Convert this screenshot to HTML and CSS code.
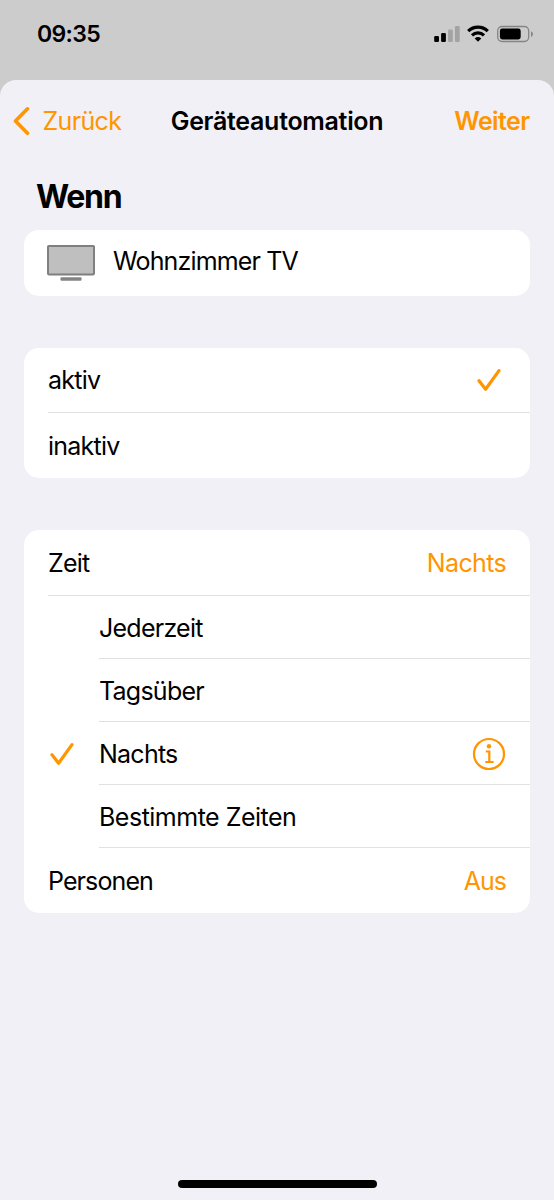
FILE: index.html
```html
<!DOCTYPE html>
<html lang="de">
<head>
<meta charset="utf-8">
<title>Geräteautomation</title>
<link rel="stylesheet" href="styles.css">
</head>
<body>
<div class="screen">
  <header class="status">
    <span class="clock">09:35</span>
    <svg class="indicators" width="100" height="18" viewBox="0 0 100 18">
      <rect x="0.2" y="11" width="4.8" height="6" rx="1.3"/>
      <rect x="7.1" y="8" width="4.8" height="9" rx="1.3"/>
      <rect class="dim" x="14" y="4.6" width="4.8" height="12.4" rx="1.3"/>
      <rect class="dim" x="20.9" y="1" width="4.8" height="16" rx="1.3"/>
      <path class="wave" d="M34.2 6.2 A14 14 0 0 1 53.8 6.2 M38 10.3 A8.7 8.7 0 0 1 50 10.3"/>
      <path d="M44 16.8 L40.7 13.4 Q44 10.8 47.3 13.4Z"/>
      <rect class="shell" x="63.7" y="1.5" width="31" height="15" rx="4.4"/>
      <rect x="65.9" y="3.6" width="20.8" height="10.8" rx="2.3"/>
      <path class="cap" d="M97 6.2 Q99 7.1 99 9 Q99 10.9 97 11.9Z"/>
    </svg>
  </header>
  <main class="sheet">
    <nav class="nav">
      <a class="back">
        <svg class="chevron" width="18" height="30" viewBox="0 0 18 30"><path d="M15.5 2.8 L3.5 15 L15.5 27.3"/></svg>
        <span class="back-label">Zurück</span>
      </a>
      <h1 class="title">Geräteautomation</h1>
      <a class="next">Weiter</a>
    </nav>
    <h2 class="heading">Wenn</h2>
    <section class="card single">
      <div class="row device">
        <svg class="tv" width="48" height="37" viewBox="0 0 48 37">
          <rect class="tv-screen" x="1" y="1" width="46" height="28.4" rx="0.8"/>
          <rect class="tv-foot" x="13.5" y="32.2" width="21" height="3.6" rx="1"/>
        </svg>
        <span class="label wohnzimmer">Wohnzimmer TV</span>
      </div>
    </section>
    <section class="card states">
      <div class="row ruled">
        <span class="label">aktiv</span>
        <svg class="check" width="24" height="24" viewBox="0 0 24 24"><path d="M2 12.7 L8.6 21.3 L22 2.6"/></svg>
      </div>
      <div class="row"><span class="label">inaktiv</span></div>
    </section>
    <section class="card conditions">
      <div class="row ruled"><span class="label">Zeit</span><span class="value">Nachts</span></div>
      <div class="option"><div class="mark"></div><div class="choice"><span class="label">Jederzeit</span></div></div>
      <div class="option"><div class="mark"></div><div class="choice"><span class="label">Tagsüber</span></div></div>
      <div class="option">
        <div class="mark"><svg class="check" width="24" height="24" viewBox="0 0 24 24"><path d="M2 12.7 L8.6 21.3 L22 2.6"/></svg></div>
        <div class="choice">
          <span class="label">Nachts</span>
          <svg class="info" width="34" height="34" viewBox="0 0 34 34">
            <circle class="ring" cx="17" cy="17" r="15"/>
            <circle class="dot" cx="17" cy="9.3" r="2.2"/>
            <path d="M13.8 14.5 H17.3 V25 M13.3 25 H21.6"/>
          </svg>
        </div>
      </div>
      <div class="option"><div class="mark"></div><div class="choice"><span class="label zeiten">Bestimmte Zeiten</span></div></div>
      <div class="row"><span class="label personen">Personen</span><span class="value aus">Aus</span></div>
    </section>
    <div class="home"></div>
  </main>
</div>
</body>
</html>
```

FILE: styles.css
```css
* { box-sizing: border-box; }
body {
  margin: 0;
  background: #ccc;
  color: #000;
  font: 400 25px/30px Inter, "Liberation Sans", sans-serif;
}
.screen { display: flex; flex-direction: column; height: 1200px; overflow: hidden; }
.status {
  display: flex;
  align-items: flex-start;
  justify-content: space-between;
  height: 80px;
  padding: 19px 20px 0 37px;
}
.clock { font-size: 23px; font-weight: 600; letter-spacing: -0.65px; }
.indicators { margin-top: 6px; }
.dim { fill: #a3a3a3; }
.wave { fill: none; stroke: #000; stroke-width: 3.2; }
.shell { fill: none; stroke: #858585; stroke-width: 1.3; }
.cap { fill: #858585; }
.sheet {
  display: flex;
  flex-direction: column;
  flex: 1;
  padding: 0 24px;
  border-radius: 16px 16px 0 0;
  background: #f1f0f6;
}
.nav {
  display: grid;
  grid-template-columns: 1fr auto 1fr;
  align-items: center;
  height: 82px;
  margin: 0 0 0 -12px;
  color: #ff9500;
}
.back { display: flex; align-items: center; gap: 13px; margin-left: -0.5px; letter-spacing: -0.65px; }
.chevron { fill: none; stroke: #ff9500; stroke-width: 3.6; stroke-linecap: round; stroke-linejoin: round; }
.title { margin: 0 -6px 0 6px; color: #000; font-size: 25px; font-weight: 600; letter-spacing: -0.3px; }
.next { justify-self: end; margin-right: 0.5px; font-weight: 600; letter-spacing: -0.6px; }
.heading {
  margin: 15px 0 13px 12px;
  font-size: 32px;
  line-height: 40px;
  font-weight: 700;
  letter-spacing: -1.3px;
}
.card { flex: none; width: 506px; border-radius: 15px; background: #fff; }
.single { height: 65.5px; }
.row {
  display: flex;
  align-items: center;
  justify-content: space-between;
  height: 65px;
  margin-left: 24px;
  padding-right: 24px;
}
.device { justify-content: flex-start; gap: 18px; margin-left: 23px; padding-bottom: 3px; }
.tv { margin-top: 5px; }
.tv-screen { fill: #bfbfbf; stroke: #7d807e; stroke-width: 2; }
.tv-foot { fill: #828483; }
.label { letter-spacing: -0.75px; }
.wohnzimmer { letter-spacing: -0.85px; }
.zeiten { letter-spacing: -0.5px; }
.personen { letter-spacing: -0.9px; }
.states { margin-top: 52px; }
.conditions { margin-top: 52px; }
.ruled, .choice { border-bottom: 1px solid #e1e1e3; }
.states .ruled { height: 65.5px; }
.conditions .ruled { height: 66px; }
.check { fill: none; stroke: #ff9500; stroke-width: 3.2; stroke-linecap: round; stroke-linejoin: round; }
.states .check { margin-right: 5px; }
.option { display: flex; height: 63px; margin-left: 24px; }
.mark { display: flex; align-items: center; width: 51px; padding-left: 2px; }
.choice { display: flex; flex: 1; align-items: center; justify-content: space-between; padding: 1px 24px 0 0; }
.info { fill: none; stroke: #ff9500; stroke-width: 2.2; }
.dot { fill: #ff9500; stroke: none; }
.value { color: #ff9500; letter-spacing: -0.65px; }
.aus { letter-spacing: -1px; }
.home { width: 199px; height: 8px; margin: auto auto 12px; border-radius: 4px; background: #000; }
```
